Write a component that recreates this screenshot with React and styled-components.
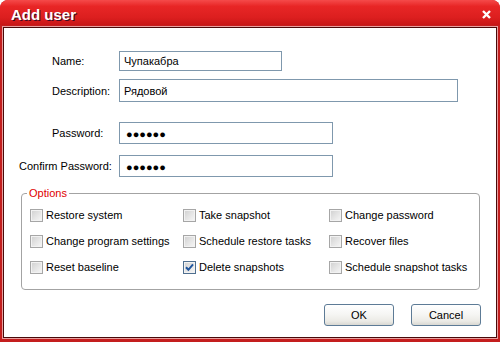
import React from "react";
import styled, { createGlobalStyle } from "styled-components";

const GlobalStyle = createGlobalStyle`
  html, body {
    margin: 0;
    padding: 0;
    background: #ffffff;
  }
  * {
    box-sizing: border-box;
  }
`;

const Window = styled.div`
  width: 500px;
  height: 342px;
  display: flex;
  flex-direction: column;
  background: #c41e1e;
  border-radius: 8px 8px 0 0;
  overflow: hidden;
  font-family: "Liberation Sans", Arial, sans-serif;
  font-size: 11px;
  color: #000;
`;

const TitleBar = styled.div`
  height: 25px;
  flex: none;
  display: flex;
  align-items: center;
  justify-content: space-between;
  padding: 3px 9px 0 11px;
  background: linear-gradient(#f54a4a 0, #e82626 25%, #dc1f1f 70%, #c81616 100%);
`;

const Title = styled.div`
  font-size: 15px;
  line-height: 17px;
  font-weight: bold;
  color: #fff;
  text-shadow: 1px 1px 0 #3c0c24;
`;

const CloseButton = styled.div`
  width: 9px;
  height: 9px;
  display: flex;
`;

const Body = styled.div`
  flex: 1;
  margin: 2px 3px 4px;
  background: #fff;
  border: 1px solid #4a0a0a;
  box-shadow: 0 0 0 1px #e8a0a0;
  display: flex;
  flex-direction: column;
`;

const Form = styled.div`
  display: flex;
  flex-direction: column;
  padding: 23px 0 0 15px;
`;

const FieldRow = styled.div`
  display: flex;
  align-items: center;
  margin-top: ${(p) => p.$gap || 0}px;
`;

const Label = styled.div`
  width: 100px;
  padding-left: ${(p) => p.$indent}px;
  white-space: nowrap;
  font-size: 11px;
`;

const Input = styled.div`
  width: ${(p) => p.$width}px;
  height: ${(p) => p.$height}px;
  border: 1px solid #7f98ad;
  background: #fff;
  display: flex;
  align-items: center;
  padding-left: 4px;
  font-size: 11px;
`;

const Dots = styled.span`
  padding-left: 2px;
  font-size: 11px;
  padding-top: 2px;
`;

const Group = styled.fieldset`
  margin: 10px 16px 0 17px;
  padding: 0 0 9px 0;
  border: 1px solid #a3a3a3;
  border-radius: 4px;
  min-width: 0;
`;

const Legend = styled.legend`
  margin-left: 5px;
  padding: 0 2px;
  color: #e00000;
  font-size: 11px;
  line-height: 12px;
`;

const OptionGrid = styled.div`
  display: grid;
  grid-template-columns: 153px 146px 1fr;
  grid-auto-rows: 26px;
  padding: 3px 0 0 8px;
`;

const Option = styled.label`
  display: flex;
  align-items: center;
  gap: 3px;
  white-space: nowrap;
`;

const Box = styled.span`
  width: 13px;
  height: 13px;
  flex: none;
  display: flex;
  align-items: center;
  justify-content: center;
  border: 1px solid ${(p) => (p.$checked ? "#4f6f8f" : "#a6a6a6")};
  background: linear-gradient(135deg, #cfcfcf 0%, #e4e4e4 50%, #f7f7f7 100%);
  box-shadow: inset 0 0 0 1px #f2f2f2;
`;

const Buttons = styled.div`
  display: flex;
  justify-content: flex-end;
  gap: 17px;
  padding: 14px 15px 0 0;
`;

const Button = styled.div`
  width: 70px;
  height: 22px;
  display: flex;
  align-items: center;
  justify-content: center;
  border: 1px solid #5d7b96;
  border-radius: 3px;
  background: linear-gradient(#ffffff 0%, #f6f6f4 45%, #ecebe6 80%, #d9d8d2 100%);
  font-size: 11px;
`;

const options = [
  ["Restore system", false],
  ["Take snapshot", false],
  ["Change password", false],
  ["Change program settings", false],
  ["Schedule restore tasks", false],
  ["Recover files", false],
  ["Reset baseline", false],
  ["Delete snapshots", true],
  ["Schedule snapshot tasks", false],
];

const Check = () => (
  <svg width="9" height="9" viewBox="0 0 9 9">
    <path d="M1 4.2 L3.4 6.8 L8 1.4" fill="none" stroke="#21569e" strokeWidth="2" />
  </svg>
);

const App = () => {
  return (
    <>
      <GlobalStyle />
      <Window>
        <TitleBar>
          <Title>Add user</Title>
          <CloseButton>
            <svg width="9" height="9" viewBox="0 0 9 9">
              <path d="M1 1 L8 8 M8 1 L1 8" stroke="#fff" strokeWidth="2.4" />
            </svg>
          </CloseButton>
        </TitleBar>
        <Body>
          <Form>
            <FieldRow>
              <Label $indent={33}>Name:</Label>
              <Input $width={163} $height={20}>Чупакабра</Input>
            </FieldRow>
            <FieldRow $gap={8}>
              <Label $indent={33}>Description:</Label>
              <Input $width={339} $height={23}>Рядовой</Input>
            </FieldRow>
            <FieldRow $gap={20}>
              <Label $indent={33}>Password:</Label>
              <Input $width={214} $height={22}><Dots>●●●●●●</Dots></Input>
            </FieldRow>
            <FieldRow $gap={11}>
              <Label $indent={0}>Confirm Password:</Label>
              <Input $width={214} $height={22}><Dots>●●●●●●</Dots></Input>
            </FieldRow>
          </Form>
          <Group>
            <Legend>Options</Legend>
            <OptionGrid>
              {options.map(([text, checked]) => (
                <Option key={text}>
                  <Box $checked={checked}>{checked && <Check />}</Box>
                  {text}
                </Option>
              ))}
            </OptionGrid>
          </Group>
          <Buttons>
            <Button>OK</Button>
            <Button>Cancel</Button>
          </Buttons>
        </Body>
      </Window>
    </>
  );
};

export default App;
